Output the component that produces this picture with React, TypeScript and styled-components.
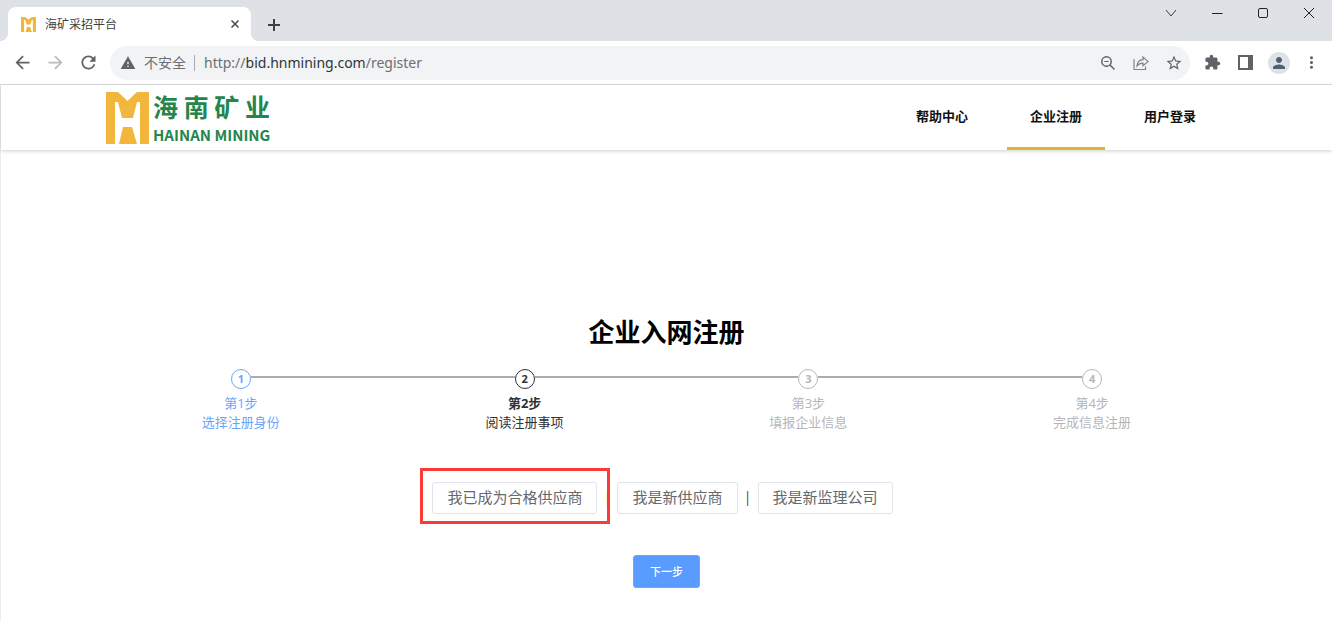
import React from "react";
import styled, { createGlobalStyle, css } from "styled-components";
import {
  MdArrowBack,
  MdArrowForward,
  MdRefresh,
  MdWarning,
  MdStarBorder,
  MdExtension,
  MdMoreVert,
  MdPerson,
} from "react-icons/md";

const GlobalStyle = createGlobalStyle`
  * { box-sizing: border-box; }
  body {
    margin: 0;
    background: #fff;
    color: #000;
    font-family: "Open Sans", "Noto Sans CJK SC", sans-serif;
    font-size: 13px;
  }
  button { font-family: inherit; cursor: pointer; }
`;

const TabStrip = styled.div`
  display: flex;
  align-items: flex-end;
  height: 41px;
  padding-left: 8px;
  background: #dee1e6;
`;

const Tab = styled.div`
  position: relative;
  display: flex;
  align-items: center;
  width: 243px;
  height: 34px;
  padding: 0 8px 0 13px;
  border-radius: 8px 8px 0 0;
  background: #fff;

  &::before,
  &::after {
    content: "";
    position: absolute;
    bottom: 0;
    width: 8px;
    height: 8px;
  }
  &::before {
    left: -8px;
    background: radial-gradient(circle at 0 0, transparent 8px, #fff 8px);
  }
  &::after {
    right: -8px;
    background: radial-gradient(circle at 100% 0, transparent 8px, #fff 8px);
  }
`;

const TabTitle = styled.span`
  flex: 1;
  margin-left: 9px;
  font-size: 12px;
  color: #3c4043;
`;

const IconButton = styled.button<{ $width?: number; $height?: number; $color?: string }>`
  display: flex;
  align-items: center;
  justify-content: center;
  flex: none;
  width: ${(p) => p.$width ?? 33}px;
  height: ${(p) => p.$height ?? 33}px;
  padding: 0;
  border: 0;
  background: none;
  color: ${(p) => p.$color ?? "#5f6368"};
`;

const NewTab = styled(IconButton)`
  margin-left: 6px;
`;

const WindowControls = styled.div`
  display: flex;
  align-self: flex-start;
  margin-left: auto;
`;

const Toolbar = styled.div`
  display: flex;
  align-items: center;
  height: 44px;
  padding: 0 4px 0 6px;
  border-bottom: 1px solid #dfe0e2;
`;

const AddressBar = styled.div`
  display: flex;
  align-items: center;
  flex: 1;
  height: 34px;
  margin: 0 6px 0 5px;
  padding-left: 10px;
  border-radius: 17px;
  background: #f1f3f4;
  color: #6b6f73;
  font-family: "Noto Sans", "Noto Sans CJK SC", sans-serif;
  font-size: 14px;
`;

const Security = styled.span`
  margin-left: 8px;
  padding-right: 8px;
  border-right: 1px solid #a9acb0;
  line-height: 16px;
`;

const Url = styled.span`
  flex: 1;
  margin-left: 9px;

  b {
    font-weight: 400;
    color: #303337;
  }
`;

const Avatar = styled.span`
  display: flex;
  align-items: center;
  justify-content: center;
  width: 22px;
  height: 22px;
  border-radius: 50%;
  background: #dee1e6;
  color: #545d78;
`;

const Page = styled.div`
  border-left: 1px solid #ececec;
`;

const Header = styled.header`
  display: flex;
  align-items: stretch;
  justify-content: space-between;
  height: 65px;
  padding: 0 105px;
  box-shadow: 0 1px 4px rgba(0, 0, 0, 0.2);
`;

const Logo = styled.a`
  display: flex;
  align-items: center;
  gap: 4px;
  color: #25854c;
  text-decoration: none;
`;

const LogoText = styled.span`
  display: flex;
  flex-direction: column;
  padding-bottom: 2px;
  font-family: "Noto Sans CJK SC", sans-serif;
  font-weight: 700;
  white-space: nowrap;
`;

const LogoChinese = styled.span`
  font-size: 25px;
  line-height: 36px;
`;

const LogoLatin = styled.span`
  font-size: 15px;
  line-height: 22px;
`;

const Nav = styled.nav`
  display: flex;
  gap: 16px;
  padding-right: 8px;
`;

const NavLink = styled.a<{ $active?: boolean }>`
  display: flex;
  align-items: center;
  justify-content: center;
  width: 98px;
  padding-bottom: 2px;
  border-bottom: 3px solid ${(p) => (p.$active ? "#e3b52f" : "transparent")};
  color: #111;
  font-weight: 700;
  text-decoration: none;
`;

const Main = styled.main`
  display: flex;
  flex-direction: column;
  align-items: center;
  padding: 166px 98px 33px;
`;

const Title = styled.h1`
  margin: 0;
  font-size: 26px;
  line-height: 32px;
`;

const Steps = styled.ol`
  display: flex;
  align-self: stretch;
  margin: 21px 0 0;
  padding: 0;
  list-style: none;
`;

type StepState = "done" | "current" | "waiting";

const stepColors: Record<StepState, string> = {
  done: "#6ba5fb",
  current: "#303133",
  waiting: "#b4b6bb",
};

const StepItem = styled.li<{ $state: StepState }>`
  position: relative;
  flex: 1;
  display: flex;
  flex-direction: column;
  align-items: center;
  color: ${(p) => stepColors[p.$state]};
  line-height: 19px;

  ${(p) =>
    p.$state === "current" &&
    css`
      strong { font-weight: 700; }
    `}

  &:not(:last-child)::after {
    content: "";
    position: absolute;
    top: 7px;
    left: calc(50% + 10px);
    width: calc(100% - 20px);
    height: 2px;
    background: #a9acb3;
  }
`;

const StepNumber = styled.span`
  display: flex;
  align-items: center;
  justify-content: center;
  width: 20px;
  height: 20px;
  margin-bottom: 5px;
  padding-bottom: 1px;
  border: 1px solid currentColor;
  border-radius: 50%;
  font-size: 11px;
  font-weight: 700;
`;

const StepName = styled.strong`
  font-weight: 400;
`;

const Choices = styled.div`
  display: flex;
  align-items: center;
  margin-top: 50px;
  padding-right: 8px;
`;

const Separator = styled.span`
  width: 20px;
  padding-bottom: 3px;
  text-align: center;
  color: #4b4b4b;
  font-size: 14px;
`;

const ChoiceWrap = styled.div<{ $marked?: boolean }>`
  position: relative;

  ${(p) =>
    p.$marked &&
    css`
      &::after {
        content: "";
        position: absolute;
        inset: -14px -13px -10px -12px;
        border: 3px solid #fb3a3a;
        pointer-events: none;
      }
    `}
`;

const ChoiceButton = styled.button`
  display: block;
  height: 32px;
  padding: 0 14px 4px;
  border: 1px solid #e1e3ea;
  border-radius: 3px;
  background: #fff;
  color: #66686c;
  font-size: 15px;
  white-space: nowrap;
`;

const NextButton = styled.button`
  height: 33px;
  margin-top: 41px;
  padding: 0 16px 2px;
  border: 1px solid #6ca7ff;
  border-radius: 3px;
  background: #599bff;
  color: #fff;
  font-size: 11px;
  font-weight: 500;
`;

function LogoMark({ width, height }: { width: number; height: number }) {
  return (
    <svg width={width} height={height} viewBox="0 0 43 52" preserveAspectRatio="none" fill="#f1b63b" aria-hidden="true">
      <path d="M0 0H12L21.500 9L31 0H43V52H34V10H31L27 26H16L12 10H9V52H0Z" />
      <path d="M17 35H26L31 52H13Z" />
    </svg>
  );
}

type GlyphProps = { size: number; width?: number; children: React.ReactNode };

function Glyph({ size, width = 1, children }: GlyphProps) {
  return (
    <svg width={size} height={size} viewBox={`0 0 ${size} ${size}`} fill="none" stroke="currentColor" strokeWidth={width} aria-hidden="true">
      {children}
    </svg>
  );
}

const steps: { name: string; text: string; state: StepState }[] = [
  { name: "第1步", text: "选择注册身份", state: "done" },
  { name: "第2步", text: "阅读注册事项", state: "current" },
  { name: "第3步", text: "填报企业信息", state: "waiting" },
  { name: "第4步", text: "完成信息注册", state: "waiting" },
];

const choices = ["我已成为合格供应商", "我是新供应商", "我是新监理公司"];

export default function App() {
  return (
    <>
      <GlobalStyle />
      <TabStrip>
        <Tab>
          <LogoMark width={15} height={15} />
          <TabTitle>海矿采招平台</TabTitle>
          <IconButton $width={16} $height={16} $color="#45484c" aria-label="关闭标签页">
            <Glyph size={8} width={1.5}><path d="M.5 .5L7.500 7.500M7.500 .5L.5 7.500" /></Glyph>
          </IconButton>
        </Tab>
        <NewTab aria-label="新标签页" $color="#3c4043">
          <Glyph size={12} width={2}><path d="M6 0V12M0 6H12" /></Glyph>
        </NewTab>
        <WindowControls>
          <IconButton $width={46} $height={26} $color="#3c4043" aria-label="搜索标签页">
            <Glyph size={12}><path d="M1 3L6 9L11 3" /></Glyph>
          </IconButton>
          <IconButton $width={46} $height={26} $color="#222" aria-label="最小化">
            <Glyph size={12}><path d="M1 6.500H11.500" /></Glyph>
          </IconButton>
          <IconButton $width={46} $height={26} $color="#222" aria-label="最大化">
            <Glyph size={12}><rect x="1.500" y="1.500" width="9" height="9" rx="1.500" /></Glyph>
          </IconButton>
          <IconButton $width={46} $height={26} $color="#222" aria-label="关闭">
            <Glyph size={12}><path d="M1 1L11 11M11 1L1 11" /></Glyph>
          </IconButton>
        </WindowControls>
      </TabStrip>

      <Toolbar>
        <IconButton aria-label="后退"><MdArrowBack size={21} /></IconButton>
        <IconButton $color="#babcbe" aria-label="前进"><MdArrowForward size={21} /></IconButton>
        <IconButton aria-label="重新加载"><MdRefresh size={21} /></IconButton>
        <AddressBar>
          <MdWarning size={16} color="#5f6368" />
          <Security>不安全</Security>
          <Url>http://<b>bid.hnmining.com</b>/register</Url>
          <IconButton aria-label="缩放">
            <Glyph size={16} width={1.5}>
              <circle cx="6.500" cy="6.500" r="4.700" />
              <path d="M10 10L14.500 14.500" />
              <path d="M4.300 6.500H8.700" strokeWidth="1" />
            </Glyph>
          </IconButton>
          <IconButton aria-label="分享" $color="#808388">
            <Glyph size={16} width={1.200}>
              <path d="M1 4V14.500H12.500V11.500" />
              <path d="M4 11C4.300 7.300 6.500 5 10 4.700V2L15.200 6.500L10 10.800V8.200C7.300 8.200 5.500 9 4 11Z" />
            </Glyph>
          </IconButton>
          <IconButton aria-label="收藏"><MdStarBorder size={18} /></IconButton>
        </AddressBar>
        <IconButton aria-label="扩展程序"><MdExtension size={17} /></IconButton>
        <IconButton aria-label="侧边栏">
          <Glyph size={15} width={2}>
            <rect x="1" y="1" width="13" height="13" />
            <path d="M12 1V14" strokeWidth="4" />
          </Glyph>
        </IconButton>
        <IconButton aria-label="个人资料"><Avatar><MdPerson size={18} /></Avatar></IconButton>
        <IconButton aria-label="更多"><MdMoreVert size={19} /></IconButton>
      </Toolbar>

      <Page>
        <Header>
          <Logo href="#home">
            <LogoMark width={43} height={52} />
            <LogoText>
              <LogoChinese>海 南 矿 业</LogoChinese>
              <LogoLatin>HAINAN MINING</LogoLatin>
            </LogoText>
          </Logo>
          <Nav>
            <NavLink href="#help">帮助中心</NavLink>
            <NavLink href="#register" $active>企业注册</NavLink>
            <NavLink href="#login">用户登录</NavLink>
          </Nav>
        </Header>

        <Main>
          <Title>企业入网注册</Title>
          <Steps>
            {steps.map((step, i) => (
              <StepItem key={step.name} $state={step.state}>
                <StepNumber>{i + 1}</StepNumber>
                <StepName>{step.name}</StepName>
                <span>{step.text}</span>
              </StepItem>
            ))}
          </Steps>
          <Choices>
            {choices.map((label, i) => (
              <React.Fragment key={label}>
                {i > 0 && <Separator>|</Separator>}
                <ChoiceWrap $marked={i === 0}>
                  <ChoiceButton type="button">{label}</ChoiceButton>
                </ChoiceWrap>
              </React.Fragment>
            ))}
          </Choices>
          <NextButton type="button">下一步</NextButton>
        </Main>
      </Page>
    </>
  );
}
